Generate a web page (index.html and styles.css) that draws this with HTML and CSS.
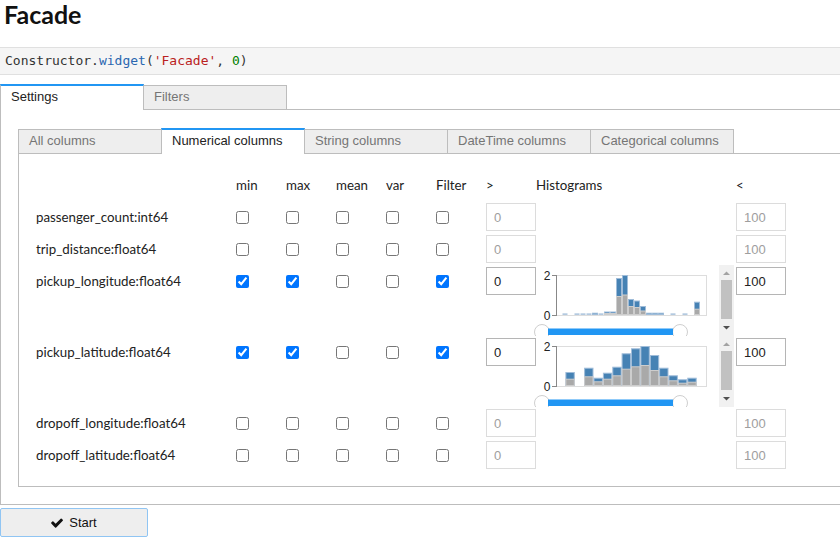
FILE: index.html
```html
<!DOCTYPE html>
<html>
<head>
<meta charset="utf-8">
<title>Facade</title>
<link rel="stylesheet" href="styles.css">
</head>
<body>
<h1 class="title">Facade</h1>
<div class="code"><span class="k">Constructor</span>.<span class="p">widget</span>(<span class="s">'Facade'</span>, <span class="n">0</span>)</div>

<div class="widget">
  <div class="tabbar">
    <div class="tab active">Settings</div>
    <div class="tab">Filters</div>
  </div>
  <div class="panel">
    <div class="tabbar">
      <div class="tab">All columns</div>
      <div class="tab active">Numerical columns</div>
      <div class="tab">String columns</div>
      <div class="tab">DateTime columns</div>
      <div class="tab">Categorical columns</div>
    </div>
    <div class="panel inner">
      <div class="row">
        <div class="cell label"></div>
        <div class="cell chk">min</div>
        <div class="cell chk">max</div>
        <div class="cell chk">mean</div>
        <div class="cell chk">var</div>
        <div class="cell chk">Filter</div>
        <div class="cell gt">&gt;</div>
        <div class="cell hist head">Histograms</div>
        <div class="cell lt">&lt;</div>
      </div>

      <div class="row">
        <div class="cell label">passenger_count:int64</div>
        <div class="cell chk"><input type="checkbox"></div>
        <div class="cell chk"><input type="checkbox"></div>
        <div class="cell chk"><input type="checkbox"></div>
        <div class="cell chk"><input type="checkbox"></div>
        <div class="cell chk"><input type="checkbox"></div>
        <div class="cell gt"><input class="num off" value="0" disabled></div>
        <div class="cell hist"></div>
        <div class="cell lt"><input class="num off" value="100" disabled></div>
      </div>

      <div class="row">
        <div class="cell label">trip_distance:float64</div>
        <div class="cell chk"><input type="checkbox"></div>
        <div class="cell chk"><input type="checkbox"></div>
        <div class="cell chk"><input type="checkbox"></div>
        <div class="cell chk"><input type="checkbox"></div>
        <div class="cell chk"><input type="checkbox"></div>
        <div class="cell gt"><input class="num off" value="0" disabled></div>
        <div class="cell hist"></div>
        <div class="cell lt"><input class="num off" value="100" disabled></div>
      </div>

      <div class="row">
        <div class="cell label">pickup_longitude:float64</div>
        <div class="cell chk"><input type="checkbox" checked></div>
        <div class="cell chk"><input type="checkbox" checked></div>
        <div class="cell chk"><input type="checkbox"></div>
        <div class="cell chk"><input type="checkbox"></div>
        <div class="cell chk"><input type="checkbox" checked></div>
        <div class="cell gt"><input class="num" value="0"></div>
        <div class="cell hist chart-cell">
          <svg class="chart" width="185" height="71" viewBox="0 0 185 71">
            <rect class="frame" x="22.5" y="10.5" width="150" height="40"/>
            <rect class="t" x="28.5" y="48.3" width="5" height="1.7"/>
            <rect class="t" x="40.5" y="48.3" width="5" height="1.7"/>
            <rect class="t" x="46.5" y="48.3" width="5" height="1.7"/>
            <rect class="t" x="52.5" y="48.3" width="5" height="1.7"/>
            <rect class="b" x="58.5" y="48.2" width="5" height="1.3"/>
            <rect class="t" x="64.5" y="48.3" width="5" height="1.7"/>
            <rect class="b" x="70.5" y="47" width="5" height="2.5"/>
            <rect class="g" x="70.5" y="48.5" width="5" height="1"/>
            <rect class="b" x="76.5" y="47" width="5" height="2.5"/>
            <rect class="g" x="76.5" y="48.5" width="5" height="1"/>
            <rect class="b" x="82.5" y="13.5" width="5" height="36"/>
            <rect class="g" x="82.5" y="31.5" width="5" height="18"/>
            <rect class="b" x="88.5" y="10.5" width="5" height="39"/>
            <rect class="g" x="88.5" y="30" width="5" height="19.5"/>
            <rect class="b" x="94.5" y="34.5" width="5" height="15"/>
            <rect class="g" x="94.5" y="41.5" width="5" height="8"/>
            <rect class="b" x="100.5" y="36" width="5" height="13.5"/>
            <rect class="g" x="100.5" y="42.5" width="5" height="7"/>
            <rect class="b" x="106.5" y="41.5" width="5" height="8"/>
            <rect class="g" x="106.5" y="46" width="5" height="3.5"/>
            <rect class="b" x="112.5" y="48.2" width="5" height="1.3"/>
            <rect class="b" x="118.5" y="48.2" width="5" height="1.3"/>
            <rect class="b" x="124.5" y="48.2" width="5" height="1.3"/>
            <rect class="t" x="136.5" y="48.3" width="5" height="1.7"/>
            <rect class="t" x="148.5" y="48.3" width="5" height="1.7"/>
            <rect class="b" x="160.5" y="37.2" width="5" height="12.3"/>
            <rect class="g" x="160.5" y="44.2" width="5" height="5.3"/>
            <line class="axis" x1="22.5" y1="10" x2="22.5" y2="51"/>
            <line class="axis" x1="18" y1="10.5" x2="22" y2="10.5"/>
            <line class="axis" x1="18" y1="50.5" x2="22" y2="50.5"/>
            <text class="tick" x="16.5" y="14.8">2</text>
            <text class="tick" x="16.5" y="54.5">0</text>
            <circle class="knob" cx="8" cy="67" r="7.5"/>
            <circle class="knob" cx="146" cy="67" r="7.5"/>
            <rect class="track" x="14" y="63.5" width="125" height="6.5"/>
          </svg>
          <svg class="sbar" width="15" height="71" viewBox="0 0 15 71">
            <rect class="sbg" x="0" y="0" width="15" height="71"/>
            <polygon class="up" points="4,10 11,10 7.5,6.5"/>
            <rect class="thumb" x="2" y="15" width="11" height="39"/>
            <polygon class="down" points="4,61 11,61 7.5,64.5"/>
          </svg>
        </div>
        <div class="cell lt"><input class="num" value="100"></div>
      </div>

      <div class="row">
        <div class="cell label">pickup_latitude:float64</div>
        <div class="cell chk"><input type="checkbox" checked></div>
        <div class="cell chk"><input type="checkbox" checked></div>
        <div class="cell chk"><input type="checkbox"></div>
        <div class="cell chk"><input type="checkbox"></div>
        <div class="cell chk"><input type="checkbox" checked></div>
        <div class="cell gt"><input class="num" value="0"></div>
        <div class="cell hist chart-cell">
          <svg class="chart" width="185" height="71" viewBox="0 0 185 71">
            <rect class="frame" x="22.5" y="10.5" width="150" height="40"/>
            <rect class="b" x="31.9" y="36.5" width="8.4" height="13"/>
            <rect class="g" x="31.9" y="43.2" width="8.4" height="6.3"/>
            <rect class="b" x="50.6" y="32.2" width="8.4" height="17.3"/>
            <rect class="g" x="50.6" y="40.8" width="8.4" height="8.7"/>
            <rect class="b" x="60" y="42.2" width="8.4" height="7.3"/>
            <rect class="g" x="60" y="45.8" width="8.4" height="3.7"/>
            <rect class="b" x="69.4" y="37.2" width="8.4" height="12.3"/>
            <rect class="g" x="69.4" y="43.2" width="8.4" height="6.3"/>
            <rect class="b" x="78.8" y="31.2" width="8.4" height="18.3"/>
            <rect class="g" x="78.8" y="39.8" width="8.4" height="9.7"/>
            <rect class="b" x="88.1" y="17.8" width="8.4" height="31.7"/>
            <rect class="g" x="88.1" y="33.2" width="8.4" height="16.3"/>
            <rect class="b" x="97.5" y="12.8" width="8.4" height="36.7"/>
            <rect class="g" x="97.5" y="30.8" width="8.4" height="18.7"/>
            <rect class="b" x="106.9" y="10.5" width="8.4" height="39"/>
            <rect class="g" x="106.9" y="29.5" width="8.4" height="20"/>
            <rect class="b" x="116.3" y="19.5" width="8.4" height="30"/>
            <rect class="g" x="116.3" y="34.5" width="8.4" height="15"/>
            <rect class="b" x="125.6" y="32.2" width="8.4" height="17.3"/>
            <rect class="g" x="125.6" y="40.8" width="8.4" height="8.7"/>
            <rect class="b" x="135" y="39.8" width="8.4" height="9.7"/>
            <rect class="g" x="135" y="44.8" width="8.4" height="4.7"/>
            <rect class="b" x="144.4" y="43.8" width="8.4" height="5.7"/>
            <rect class="g" x="144.4" y="47.2" width="8.4" height="2.3"/>
            <rect class="b" x="153.8" y="42.2" width="8.4" height="7.3"/>
            <rect class="g" x="153.8" y="46.2" width="8.4" height="3.3"/>
            <line class="axis" x1="22.5" y1="10" x2="22.5" y2="51"/>
            <line class="axis" x1="18" y1="10.5" x2="22" y2="10.5"/>
            <line class="axis" x1="18" y1="50.5" x2="22" y2="50.5"/>
            <text class="tick" x="16.5" y="14.8">2</text>
            <text class="tick" x="16.5" y="54.5">0</text>
            <circle class="knob" cx="8" cy="67" r="7.5"/>
            <circle class="knob" cx="146" cy="67" r="7.5"/>
            <rect class="track" x="14" y="63.5" width="125" height="6.5"/>
          </svg>
          <svg class="sbar" width="15" height="71" viewBox="0 0 15 71">
            <rect class="sbg" x="0" y="0" width="15" height="71"/>
            <polygon class="up" points="4,10 11,10 7.5,6.5"/>
            <rect class="thumb" x="2" y="15" width="11" height="39"/>
            <polygon class="down" points="4,61 11,61 7.5,64.5"/>
          </svg>
        </div>
        <div class="cell lt"><input class="num" value="100"></div>
      </div>

      <div class="row">
        <div class="cell label">dropoff_longitude:float64</div>
        <div class="cell chk"><input type="checkbox"></div>
        <div class="cell chk"><input type="checkbox"></div>
        <div class="cell chk"><input type="checkbox"></div>
        <div class="cell chk"><input type="checkbox"></div>
        <div class="cell chk"><input type="checkbox"></div>
        <div class="cell gt"><input class="num off" value="0" disabled></div>
        <div class="cell hist"></div>
        <div class="cell lt"><input class="num off" value="100" disabled></div>
      </div>

      <div class="row">
        <div class="cell label">dropoff_latitude:float64</div>
        <div class="cell chk"><input type="checkbox"></div>
        <div class="cell chk"><input type="checkbox"></div>
        <div class="cell chk"><input type="checkbox"></div>
        <div class="cell chk"><input type="checkbox"></div>
        <div class="cell chk"><input type="checkbox"></div>
        <div class="cell gt"><input class="num off" value="0" disabled></div>
        <div class="cell hist"></div>
        <div class="cell lt"><input class="num off" value="100" disabled></div>
      </div>
    </div>
  </div>
</div>

<button class="start"><svg class="ico" width="12" height="10" viewBox="110 360 1565 1110"><path d="M1671 566q0 40-28 68l-724 724-136 136q-28 28-68 28t-68-28l-136-136-362-362q-28-28-28-68t28-68l136-136q28-28 68-28t68 28l294 295 656-657q28-28 68-28t68 28l136 136q28 28 28 68z"/></svg>Start</button>
</body>
</html>
```

FILE: styles.css
```css
html, body {
  margin: 0;
  padding: 0;
  overflow: hidden;
  background: #fff;
}
body {
  font-family: "Lato", "Noto Sans", sans-serif;
  font-size: 13.3px;
  color: #222;
}
.title {
  margin: 0;
  height: 47px;
  padding-left: 4px;
  font-family: "Lato", "Noto Sans", sans-serif;
  font-weight: bold;
  font-size: 25px;
  line-height: 28px;
  color: #111;
}
.code {
  height: 28px;
  box-sizing: border-box;
  border-top: 1px solid #e0e0e0;
  border-bottom: 1px solid #e0e0e0;
  background: #f5f5f5;
  padding-left: 5px;
  font-family: "DejaVu Sans Mono", monospace;
  font-size: 13px;
  line-height: 26px;
  color: #333;
  white-space: pre;
}
.code .p { color: #2a66b0; }
.code .s { color: #ba2121; }
.code .n { color: #008000; }

.widget {
  margin-top: 9px;
  width: 880px;
}
.tabbar {
  display: flex;
  align-items: flex-end;
  height: 26px;
  box-sizing: border-box;
  border-bottom: 1px solid #bdbdbd;
  font-family: "Liberation Sans", Arial, sans-serif;
  font-size: 13px;
}
.tab {
  box-sizing: border-box;
  flex: 0 0 144px;
  width: 144px;
  height: 24px;
  margin-left: -1px;
  margin-bottom: 0;
  padding: 0 10px;
  border: 1px solid #bdbdbd;
  border-bottom: none;
  background: #eeeeee;
  color: #757575;
  line-height: 22px;
  white-space: nowrap;
  overflow: hidden;
}
.tab:first-child {
  margin-left: 0;
}
.tab.active {
  height: 26px;
  margin-bottom: -1px;
  border-top: 2px solid #2196f3;
  background: #fff;
  color: #222;
  line-height: 21px;
  position: relative;
}
.panel {
  border: 1px solid #bdbdbd;
  border-top: none;
  padding: 18px 17px 17px;
}
.panel.inner {
  padding: 15px 17px 15px;
}
.row {
  display: flex;
  align-items: flex-start;
}
.cell {
  height: 32px;
  display: flex;
  align-items: center;
  flex: none;
  white-space: nowrap;
}
.label { width: 200px; }
.chk { width: 50px; }
.gt { width: 48px; }
.hist { width: 200px; }
.hist.head { padding-left: 2px; box-sizing: border-box; }
.lt { width: 50px; margin-left: 2px; }
.chart-cell {
  height: 71px;
  align-items: flex-start;
}
.chk input {
  margin: 0;
  width: 13px;
  height: 13px;
}
.num {
  box-sizing: border-box;
  width: 50px;
  height: 28px;
  margin: 0;
  padding: 0 7px;
  border: 1px solid #b5b5b5;
  border-radius: 0;
  background: #fff;
  font-family: "Liberation Sans", Arial, sans-serif;
  font-size: 13px;
  color: #222;
  outline: none;
}
.num.off {
  border-color: #dcdcdc;
  color: #9e9e9e;
  -webkit-text-fill-color: #9e9e9e;
}
.chart { display: block; }
.sbar { display: block; }
.frame { fill: none; stroke: #dddddd; stroke-width: 1; }
.b { fill: #4682b4; stroke: #9fbcd9; stroke-width: 1; }
.g { fill: #a9a9a9; stroke: #cdcdcd; stroke-width: 1; }
.t { fill: #b3c9e0; }
.axis { stroke: #888; stroke-width: 1; }
.tick {
  font-family: "Liberation Sans", Arial, sans-serif;
  font-size: 12px;
  fill: #222;
  text-anchor: end;
}
.knob { fill: #fff; stroke: #cfcfcf; stroke-width: 1; }
.track { fill: #2196f3; }
.sbg { fill: #f1f1f1; }
.thumb { fill: #c1c1c1; }
.up { fill: #a3a3a3; }
.down { fill: #505050; }

.start {
  display: flex;
  align-items: center;
  justify-content: center;
  gap: 6px;
  margin: 3px 0 0;
  width: 148px;
  height: 29px;
  box-sizing: border-box;
  border: 1px solid #90c5f3;
  border-radius: 2px;
  background: #eeeeee;
  font-family: "Liberation Sans", Arial, sans-serif;
  font-size: 13px;
  color: #111;
  padding: 0;
}
.ico { display: block; fill: #111; }
```
